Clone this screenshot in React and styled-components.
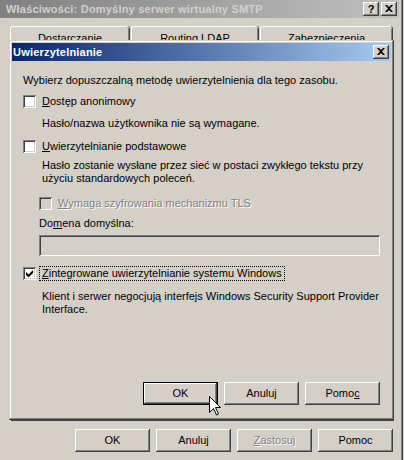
import React from "react";
import styled, { createGlobalStyle, css } from "styled-components";

const FACE = "#d4d0c8";

const GlobalStyle = createGlobalStyle`
  html, body {
    margin: 0;
    padding: 0;
    background: ${FACE};
  }
  body {
    font-family: Tahoma, "Liberation Sans", Arial, sans-serif;
    font-size: 11px;
    color: #000;
  }
  * { box-sizing: border-box; }
`;

const raised = css`
  box-shadow: inset -1px -1px #404040, inset 1px 1px #ffffff,
    inset -2px -2px #808080, inset 2px 2px ${FACE};
`;

const sunken = css`
  box-shadow: inset 1px 1px #808080, inset -1px -1px #ffffff,
    inset 2px 2px #404040, inset -2px -2px ${FACE};
`;

const Screen = styled.div`
  position: relative;
  width: 404px;
  height: 460px;
  overflow: hidden;
  background: ${FACE};
`;

const BackWindow = styled.div`
  width: 403px;
  height: 100%;
  display: flex;
  flex-direction: column;
  box-shadow: inset -1px 0 #404040, inset -2px 0 #808080;
`;

const TitleBar = styled.div`
  height: 18px;
  display: flex;
  align-items: center;
  padding: 0 2px 0 ${(p) => p.$pad || 6}px;
  margin-right: ${(p) => p.$mr || 0}px;
  font-weight: bold;
  font-size: 11px;
  letter-spacing: 0.2px;
  color: ${(p) => (p.$active ? "#ffffff" : FACE)};
  background: ${(p) =>
    p.$active
      ? "linear-gradient(to right, #0a246a, #a6caf0)"
      : "linear-gradient(to right, #808080, #c0c0c0)"};
  white-space: nowrap;
`;

const CaptionGroup = styled.div`
  margin-left: auto;
  display: flex;
  gap: 2px;
`;

const CaptionButton = styled.div`
  width: 16px;
  height: 14px;
  ${raised};
  background: ${FACE};
  display: flex;
  align-items: center;
  justify-content: center;
  color: #000;
  font-weight: bold;
  font-size: 11px;
  letter-spacing: 0;
  line-height: 14px;
  padding-bottom: 1px;
`;

const TabStrip = styled.div`
  display: flex;
  gap: 2px;
  margin-top: 8px;
  padding-left: 10px;
  height: 20px;
`;

const Tab = styled.div`
  width: ${(p) => p.$w}px;
  border-radius: 3px 3px 0 0;
  border-top: 1px solid #ffffff;
  border-left: 1px solid #ffffff;
  box-shadow: inset -1px 0 #808080, 1px 0 #404040;
  text-align: center;
  padding-top: 5px;
  line-height: 13px;
`;

const TabPanel = styled.div`
  flex: 1;
  margin: 0 10px;
  border-top: 1px solid #ffffff;
  border-left: 1px solid #ffffff;
  box-shadow: inset -1px -1px #808080, 1px 1px #404040;
`;

const Footer = styled.div`
  height: 40px;
  display: flex;
  justify-content: flex-end;
  gap: 6px;
  padding: 9px 10px 8px 0;
`;

const Button = styled.div`
  width: 75px;
  height: 23px;
  display: flex;
  align-items: center;
  justify-content: center;
  background: ${FACE};
  ${raised};
  ${(p) =>
    p.$default &&
    css`
      box-shadow: inset 0 0 0 1px #000, inset -2px -2px #404040,
        inset 2px 2px #ffffff, inset -3px -3px #808080;
    `}
  color: ${(p) => (p.$disabled ? "#808080" : "#000")};
  text-shadow: ${(p) => (p.$disabled ? "1px 1px #ffffff" : "none")};
  line-height: 13px;
`;

const Dialog = styled.div`
  position: absolute;
  left: 9px;
  top: 40px;
  width: 385px;
  height: 380px;
  padding: 3px;
  display: flex;
  flex-direction: column;
  background: ${FACE};
  box-shadow: inset -1px -1px #404040, inset 1px 1px ${FACE},
    inset -2px -2px #808080, inset 2px 2px #ffffff;
`;

const DialogBody = styled.div`
  flex: 1;
  display: flex;
  flex-direction: column;
  padding: 13px 11px 12px 11px;
`;

const Text = styled.div`
  margin-top: ${(p) => p.$mt || 0}px;
  padding-left: ${(p) => p.$indent || 0}px;
  line-height: 13px;
  color: ${(p) => (p.$disabled ? "#808080" : "#000")};
  text-shadow: ${(p) => (p.$disabled ? "1px 1px #ffffff" : "none")};
`;

const CheckRow = styled.div`
  display: flex;
  align-items: center;
  height: 15px;
  margin-top: ${(p) => p.$mt || 0}px;
  padding-left: ${(p) => p.$indent || 0}px;
`;

const Box = styled.div`
  width: 13px;
  height: 13px;
  flex: none;
  ${sunken};
  background: ${(p) => (p.$disabled ? FACE : "#ffffff")};
  display: flex;
  align-items: center;
  justify-content: center;
`;

const Label = styled.span`
  margin-left: ${(p) => (p.$focus ? 3 : 6)}px;
  line-height: 13px;
  padding: ${(p) => (p.$focus ? "0 2px" : "0")};
  border: ${(p) => (p.$focus ? "1px dotted #000" : "none")};
  color: ${(p) => (p.$disabled ? "#808080" : "#000")};
  text-shadow: ${(p) => (p.$disabled ? "1px 1px #ffffff" : "none")};
`;

const Field = styled.div`
  margin: 5px 0 0 16px;
  height: 21px;
  background: ${FACE};
  ${sunken};
`;

const ButtonRow = styled.div`
  margin-top: auto;
  display: flex;
  justify-content: flex-end;
  gap: 6px;
`;

const Cursor = styled.svg`
  position: absolute;
  left: 209px;
  top: 396px;
`;

const CloseGlyph = () => (
  <svg width="8" height="7" viewBox="0 0 8 7">
    <path d="M0 0h2l2 2 2-2h2L5 3.5 8 7H6L4 5 2 7H0l3-3.5z" fill="#000" />
  </svg>
);

const Check = () => (
  <svg width="7" height="7" viewBox="0 0 7 7">
    <path d="M0 2v3l2 2h1l4-4V0L2.5 4.5z" fill="#000" />
  </svg>
);

const CheckBox = ({ checked, disabled, focus, indent, mt, children }) => (
  <CheckRow $indent={indent} $mt={mt}>
    <Box $disabled={disabled}>{checked && <Check />}</Box>
    <Label $disabled={disabled} $focus={focus}>
      {children}
    </Label>
  </CheckRow>
);

export default function App() {
  return (
    <>
      <GlobalStyle />
      <Screen>
        <BackWindow>
          <TitleBar $mr={4}>
            Właściwości: Domyślny serwer wirtualny SMTP
            <CaptionGroup>
              <CaptionButton>?</CaptionButton>
              <CaptionButton>
                <CloseGlyph />
              </CaptionButton>
            </CaptionGroup>
          </TitleBar>
          <TabStrip>
            <Tab $w={119}>Dostarczanie</Tab>
            <Tab $w={127}>Routing LDAP</Tab>
            <Tab $w={132}>Zabezpieczenia</Tab>
          </TabStrip>
          <TabPanel />
          <Footer>
            <Button>OK</Button>
            <Button>Anuluj</Button>
            <Button $disabled>
              <span>
                <u>Z</u>astosuj
              </span>
            </Button>
            <Button>Pomoc</Button>
          </Footer>
        </BackWindow>

        <Dialog>
          <TitleBar $active $pad={1}>
            Uwierzytelnianie
            <CaptionGroup>
              <CaptionButton>
                <CloseGlyph />
              </CaptionButton>
            </CaptionGroup>
          </TitleBar>
          <DialogBody>
            <Text>Wybierz dopuszczalną metodę uwierzytelnienia dla tego zasobu.</Text>
            <CheckBox mt={7}>
              <u>D</u>ostęp anonimowy
            </CheckBox>
            <Text $mt={8} $indent={19}>
              Hasło/nazwa użytkownika nie są wymagane.
            </Text>
            <CheckBox mt={9}>
              <u>U</u>wierzytelnianie podstawowe
            </CheckBox>
            <Text $mt={5} $indent={19}>
              Hasło zostanie wysłane przez sieć w postaci zwykłego tekstu przy
              <br />
              użyciu standardowych poleceń.
            </Text>
            <CheckBox mt={11} indent={16} disabled>
              <u>W</u>ymaga szyfrowania mechanizmu TLS
            </CheckBox>
            <Text $mt={6} $indent={16}>
              Do<u>m</u>ena domyślna:
            </Text>
            <Field />
            <CheckBox mt={10} checked focus>
              <u>Z</u>integrowane uwierzytelnianie systemu Windows
            </CheckBox>
            <Text $mt={9} $indent={19}>
              Klient i serwer negocjują interfejs Windows Security Support Provider
              <br />
              Interface.
            </Text>
            <ButtonRow>
              <Button $default>OK</Button>
              <Button>Anuluj</Button>
              <Button>
                <span>
                  Pomo<u>c</u>
                </span>
              </Button>
            </ButtonRow>
          </DialogBody>
        </Dialog>

        <Cursor width="12" height="20" viewBox="0 0 12 20">
          <path
            d="M0.5 0.5V16.5L4.5 12.5L7.5 19L9.5 18L6.5 11.5H11.5Z"
            fill="#fff"
            stroke="#000"
            strokeWidth="1"
          />
        </Cursor>
      </Screen>
    </>
  );
}
